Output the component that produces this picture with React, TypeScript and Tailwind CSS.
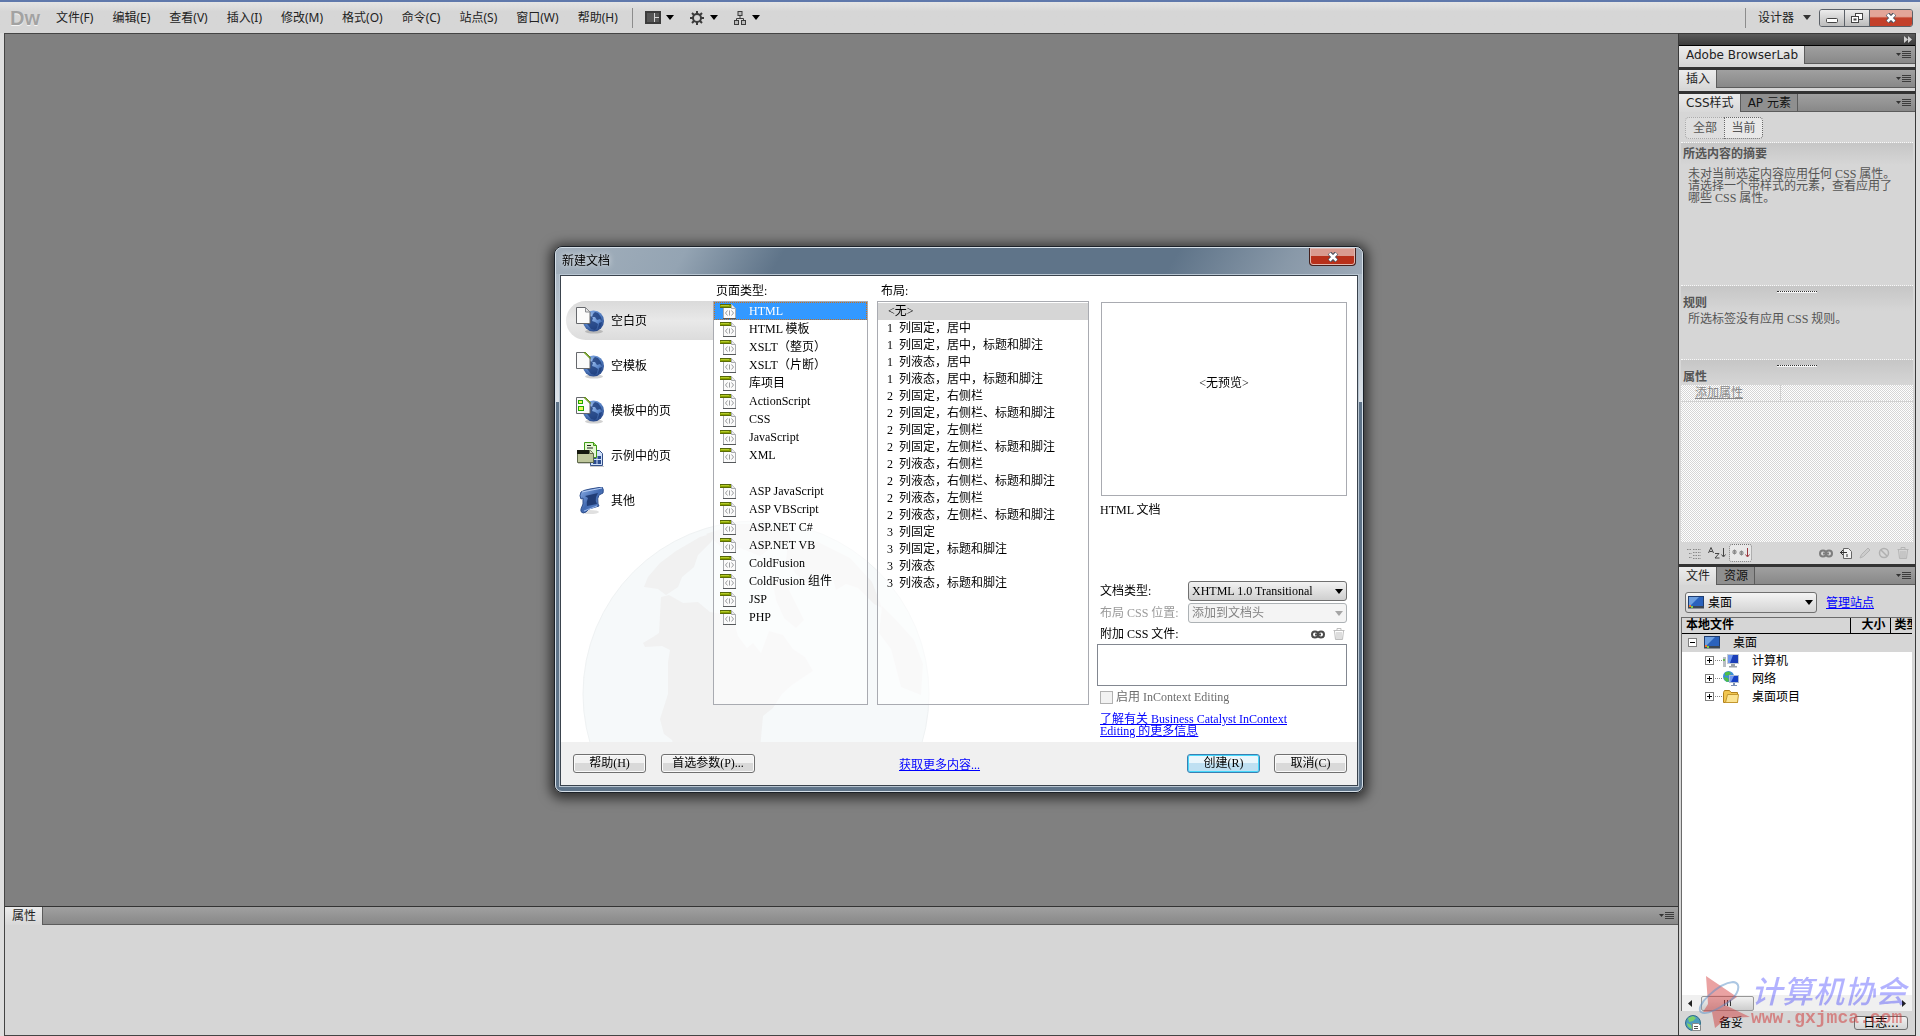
import { useState, type ReactNode } from "react";
import clsx from "clsx";

const MENUS = [
  "文件(F)",
  "编辑(E)",
  "查看(V)",
  "插入(I)",
  "修改(M)",
  "格式(O)",
  "命令(C)",
  "站点(S)",
  "窗口(W)",
  "帮助(H)",
];

const PAGE_TYPES = [
  "HTML",
  "HTML 模板",
  "XSLT（整页）",
  "XSLT（片断）",
  "库项目",
  "ActionScript",
  "CSS",
  "JavaScript",
  "XML",
  "",
  "ASP JavaScript",
  "ASP VBScript",
  "ASP.NET C#",
  "ASP.NET VB",
  "ColdFusion",
  "ColdFusion 组件",
  "JSP",
  "PHP",
];

const LAYOUTS: [string, string][] = [
  ["1", "列固定，居中"],
  ["1", "列固定，居中，标题和脚注"],
  ["1", "列液态，居中"],
  ["1", "列液态，居中，标题和脚注"],
  ["2", "列固定，右侧栏"],
  ["2", "列固定，右侧栏、标题和脚注"],
  ["2", "列固定，左侧栏"],
  ["2", "列固定，左侧栏、标题和脚注"],
  ["2", "列液态，右侧栏"],
  ["2", "列液态，右侧栏、标题和脚注"],
  ["2", "列液态，左侧栏"],
  ["2", "列液态，左侧栏、标题和脚注"],
  ["3", "列固定"],
  ["3", "列固定，标题和脚注"],
  ["3", "列液态"],
  ["3", "列液态，标题和脚注"],
];

function Arrow({ className = "text-black" }: { className?: string }) {
  return (
    <svg width="8" height="5" viewBox="0 0 8 5" className={clsx("shrink-0", className)}>
      <path d="M0 0h8L4 5z" fill="currentColor" />
    </svg>
  );
}

/* ---------- icons of the new document dialog ---------- */

function DocIcon() {
  return (
    <svg width="17" height="17" viewBox="0 0 17 17" className="shrink-0">
      <path d="M3.500 1.500h8l4 4v10h-12z" fill="#fbfbfb" stroke="#a9abae" />
      <path d="M11.500 1.500v4h4" fill="#ececec" stroke="#a9abae" />
      <path d="M3 15.500h13" stroke="#55585b" />
      <path d="M7.500 7.500L5.500 10l2 2.500M11.500 7.500l2 2.500-2 2.500M9.500 7.500v5" fill="none" stroke="#9a9c9e" />
      <path d="M0 1h11v4H0z" fill="#8aa300" />
      <path d="M0 1h11v1H0z" fill="#55660a" />
      <path d="M1 2h8v1H1z" fill="#b4cb2a" />
      <path d="M0 4h11v1H0z" fill="#5b6d06" />
    </svg>
  );
}

function IconDefs() {
  return (
    <defs>
      <radialGradient id="globe" cx="40%" cy="30%" r="70%">
        <stop offset="0" stopColor="#9dbdec" />
        <stop offset="0.6" stopColor="#5a86ca" />
        <stop offset="1" stopColor="#27488a" />
      </radialGradient>
      <linearGradient id="scroll" x1="0" y1="0" x2="1" y2="1">
        <stop offset="0" stopColor="#8db0e8" />
        <stop offset="0.5" stopColor="#4169b0" />
        <stop offset="1" stopColor="#6d95d6" />
      </linearGradient>
    </defs>
  );
}

function GlobeIcon({ kind }: { kind: "blank" | "template" | "page" }) {
  return (
    <svg width="29" height="27" viewBox="0 0 29 27" className="shrink-0">
      <IconDefs />
      <ellipse cx="18" cy="24.500" rx="9" ry="2" fill="#000" opacity="0.18" />
      <circle cx="17.500" cy="14" r="10.500" fill="url(#globe)" />
      <path
        d="M19 5l3 1 3 4 1 4-2-2-3 1-2-3-3 0 1-3zM12 11l3-2 2 2-1 3 3 1 3 2-1 4-2 2-4-1-3-4-2-2 1-3zM23 16l3-1-1 4-3 3z"
        fill="#1d3c7a"
        opacity="0.8"
      />
      <path d="M.5.500h9L14 5v11.500H.5z" fill="#fbfbfb" stroke="#66686c" />
      {kind === "blank" && <path d="M9.500.500V5H14z" fill="#e4e4e4" stroke="#8a8c90" />}
      {kind !== "blank" && <path d="M8 .500h1.500L14 5v1.500z" fill="#9cc63c" stroke="#5f8a1c" />}
      {kind === "page" && (
        <g fill="#eaf95f" stroke="#20a800">
          <rect x="2.500" y="3.500" width="4" height="3" />
          <rect x="2.500" y="9.500" width="5" height="4" />
        </g>
      )}
    </svg>
  );
}

function SampleIcon() {
  return (
    <svg width="29" height="27" viewBox="0 0 29 27" className="shrink-0">
      <path d="M14.500 8.500h9l3 3v12h-12z" fill="#cfe0fa" stroke="#345088" />
      <path d="M17 14h8v8h-8z" fill="#2c4c8e" />
      <path d="M17 17.500h8M21 14v8" stroke="#cfe0fa" />
      <path d="M8.500.500h9l3 3v12h-12z" fill="#e6f8d4" stroke="#3f9a16" />
      <path d="M11 3.500h4M11 6h6" stroke="#222" />
      <path d="M17.500.500v3h3" fill="#a6d672" stroke="#3f9a16" />
      <path d="M1.500 8.500h13l3 3v9h-16z" fill="#bfc79c" stroke="#5f6a4b" />
      <path d="M1 8h12v4H1z" fill="#15180e" />
      <path d="M13.500 8.500v3h4" fill="#dde3c4" stroke="#5f6a4b" />
      <path d="M2 21.500h12M14 24.500h14" stroke="#555" opacity="0.3" />
    </svg>
  );
}

function ScrollIcon() {
  return (
    <svg width="29" height="27" viewBox="0 0 29 27" className="shrink-0">
      <IconDefs />
      <ellipse cx="14" cy="25" rx="9" ry="2" fill="#000" opacity="0.12" />
      <path
        d="M5 5q3-2 9-3l12-2q2 2 1 6l-4 2q-2 3-1 9l1 2-10 3q-3 4-6 4-3-1-2-4l2-5V11l-2 1q-2-3 0-7z"
        fill="url(#scroll)"
        stroke="#2f4f8c"
      />
      <path d="M9 9l13-3-2 4q-1 4 1 7l-10 2q-1-4 1-8z" fill="#213d76" />
      <path d="M6 5l20-4" stroke="#b5cdf5" />
      <path d="M8 24l13-5" stroke="#9bbaf0" />
    </svg>
  );
}

const CATEGORIES: { label: string; icon: ReactNode }[] = [
  { label: "空白页", icon: <GlobeIcon kind="blank" /> },
  { label: "空模板", icon: <GlobeIcon kind="template" /> },
  { label: "模板中的页", icon: <GlobeIcon kind="page" /> },
  { label: "示例中的页", icon: <SampleIcon /> },
  { label: "其他", icon: <ScrollIcon /> },
];

function WorldBackdrop() {
  return (
    <svg
      width="348"
      height="222"
      viewBox="0 0 348 222"
      className="pointer-events-none absolute bottom-0 left-[21px]"
    >
      <circle cx="174" cy="174" r="173" fill="#f6f9fa" stroke="#eff2f3" />
      <g fill="#f1f1f1">
        <path d="M79 77l8-2 14 8 15-1 12 10 14 2 10 8 4 14 9 12 6-5 8 10 8-22 14 4 10 14 12 8 8 14-12 8-9 6-10 9-9 14-10 8-2 22-1 12H93l-3-10-8-6-4-15 8-25 0-32 2-12-8-4-17 1-2-4 10-6 6-4z" />
        <path d="M66 57l12-14 16-12 24-14 14-4-2 8-14 14-4 12-12 10-4 10-12 8-8-6-14-2z" />
        <path d="M124 14l30-10h32l20 8 4 10-18 4-14 10-20-8-14 4-8-8z" />
        <path d="M206 24l30-2 32 16 22 24 10 26-8-4-16-16-12-4-10 6-4-14-14-2-8 12-14-12-10-14z" />
        <path d="M190 60l14 4 8 16 10 20-8 8-12-10-8-18z" />
        <path d="M300 86l14 14 18 20 9 24-2 31-20-8-10-38-12-16z" />
      </g>
    </svg>
  );
}

function LinkIcon({ className }: { className: string }) {
  return (
    <svg width="14" height="9" viewBox="0 0 14 9" className={className}>
      <g fill="none" stroke="currentColor" strokeWidth="2">
        <rect x="1" y="1.500" width="6" height="6" rx="3" />
        <rect x="7" y="1.500" width="6" height="6" rx="3" />
        <path d="M4 4.500h6" />
      </g>
    </svg>
  );
}

function TrashIcon({ className }: { className: string }) {
  return (
    <svg width="12" height="12" viewBox="0 0 12 12" className={className}>
      <path
        d="M.5 2.500h11M4 2V.500h4V2M1.500 3l1 8.500h7l1-8.500M4 4v7M6 4v7M8 4v7"
        fill="none"
        stroke="currentColor"
      />
    </svg>
  );
}

function CloseMark() {
  return (
    <svg width="12" height="10" viewBox="0 0 12 10">
      <path d="M2.500 1l7 8M9.500 1l-7 8" stroke="#4d5360" strokeWidth="4.500" />
      <path d="M2.500 1.500l7 7M9.500 1.500l-7 7" stroke="#fff" strokeWidth="2.500" />
    </svg>
  );
}

function DialogButton({ children, primary, wide }: { children: ReactNode; primary?: boolean; wide?: boolean }) {
  return (
    <button
      type="button"
      className={clsx(
        "h-[19px] rounded-[3px] border text-center leading-4",
        wide ? "w-[94px]" : "w-[73px]",
        primary
          ? "border-[#3c7fb1] bg-linear-to-b from-[#eaf6fc] from-50% to-[#bfe0f2] to-50% ring-1 ring-[#46d8fb] ring-inset"
          : "border-[#707070] bg-linear-to-b from-[#f2f2f2] from-50% to-[#d9d9d9] to-50% ring-1 ring-[#fafafa] ring-inset"
      )}
    >
      {children}
    </button>
  );
}

function NewDocumentDialog() {
  const [category, setCategory] = useState(0);
  const [pageType, setPageType] = useState("HTML");
  const [layout, setLayout] = useState(-1);

  return (
    <div className="fixed inset-0 flex items-center justify-center pt-[3px] pr-[2px]">
      <div
        role="dialog"
        aria-labelledby="dialog-title"
        className="w-[810px] rounded-lg border border-[#1b2128] shadow-[0_2px_12px_4px_rgba(0,0,0,0.6)] [font-family:'Liberation_Serif','Noto_Sans_CJK_SC',serif]"
      >
        <div className="rounded-[7px] border border-[#d5dfe8] bg-[#5f7489] bg-[linear-gradient(to_bottom,#9fadbb,#dde3e9)] bg-[length:100%_154px] bg-no-repeat">
          <div className="flex h-[26px] items-start justify-between rounded-t-[6px] bg-[linear-gradient(120deg,#a3b0bc_0,#94a4b3_16%,#5f7489_28%,#5f7489_76%,#8898a8_90%,#9daab8_100%)] px-[6px]">
            <h1
              id="dialog-title"
              className="pt-[3px] text-[12px] leading-5 text-black [text-shadow:0_0_6px_#fff]"
            >
              新建文档
            </h1>
            <button
              type="button"
              aria-label="关闭"
              className="flex h-[18px] w-[47px] items-center justify-center rounded-b-[4px] border border-t-0 border-[#43201d] bg-linear-to-b from-[#d99a8f] from-45% to-[#b8301a] to-50% ring-1 ring-[#e0b7b0] ring-inset"
            >
              <CloseMark />
            </button>
          </div>

          <div className="px-[3px] pb-1">
            <div className="border border-[#b9c6d2]">
              <div className="border border-[#3a434d] bg-white text-[12px] text-black">
                <div className="relative flex h-[466px]">
                  <WorldBackdrop />

                  {/* Categories */}
                  <nav className="relative flex w-[152px] flex-col gap-[6px] pt-[25px] pl-[5px]">
                    {CATEGORIES.map((c, i) => (
                      <button
                        key={c.label}
                        type="button"
                        onClick={() => setCategory(i)}
                        className={clsx(
                          "flex h-[39px] items-center gap-[6px] rounded-l-full pl-[10px] text-left",
                          i === category && "bg-linear-to-b from-[#dadada] via-[#e9e9e9] to-[#dcdcdc]"
                        )}
                      >
                        {c.icon}
                        <span>{c.label}</span>
                      </button>
                    ))}
                  </nav>

                  {/* Page types */}
                  <section className="relative flex w-[155px] flex-col pt-[5px] pb-[37px]">
                    <h2 className="pl-[3px] leading-5">页面类型:</h2>
                    <ul className="flex-1 border border-[#a9abb1] bg-white/60">
                      {PAGE_TYPES.map((t, i) => (
                        <li key={i} className="h-[18px]">
                          {t && (
                            <button
                              type="button"
                              onClick={() => setPageType(t)}
                              className={clsx(
                                "flex h-[18px] w-full items-center gap-3 pl-[6px] text-left",
                                t === pageType &&
                                  "bg-[#3399ff] text-white outline-1 -outline-offset-1 outline-[#c9701a] outline-dotted"
                              )}
                            >
                              <DocIcon />
                              {t}
                            </button>
                          )}
                        </li>
                      ))}
                    </ul>
                  </section>

                  {/* Layouts */}
                  <section className="relative ml-[9px] flex w-[212px] flex-col pt-[5px] pb-[37px]">
                    <h2 className="pl-1 leading-5">布局:</h2>
                    <ul className="flex-1 border border-[#a9abb1] bg-white/60">
                      <li>
                        <button
                          type="button"
                          onClick={() => setLayout(-1)}
                          className={clsx("h-[17px] w-full pl-[10px] text-left leading-[17px]", layout === -1 && "bg-[#d6d6d6]")}
                        >
                          &lt;无&gt;
                        </button>
                      </li>
                      {LAYOUTS.map(([cols, name], i) => (
                        <li key={name + cols}>
                          <button
                            type="button"
                            onClick={() => setLayout(i)}
                            className={clsx("flex h-[17px] w-full pl-[9px] text-left leading-[17px]", layout === i && "bg-[#d6d6d6]")}
                          >
                            <span className="w-3">{cols}</span>
                            {name}
                          </button>
                        </li>
                      ))}
                    </ul>
                  </section>

                  {/* Preview and options */}
                  <section className="relative ml-2 flex flex-1 flex-col pt-[26px] pr-[10px] pb-[5px]">
                    <div className="ml-1 flex h-[194px] items-center justify-center border border-[#a9abb1] pb-8">
                      &lt;无预览&gt;
                    </div>
                    <p className="mt-1 pl-[3px] leading-5">HTML 文档</p>

                    <div className="mt-auto flex h-[22px] items-center justify-between pl-[3px]">
                      <label htmlFor="doctype">文档类型:</label>
                      <div className="relative">
                        <select
                          id="doctype"
                          className="block h-5 w-[159px] appearance-none rounded-[3px] border border-[#707070] bg-linear-to-b from-[#f2f2f2] to-[#cfcfcf] pl-[3px]"
                        >
                          <option>XHTML 1.0 Transitional</option>
                        </select>
                        <span className="pointer-events-none absolute inset-y-0 right-1 flex items-center">
                          <Arrow />
                        </span>
                      </div>
                    </div>
                    <div className="flex h-[22px] items-center justify-between pl-[3px]">
                      <label htmlFor="csspos" className="text-[#9a9a9a]">
                        布局 CSS 位置:
                      </label>
                      <div className="relative">
                        <select
                          id="csspos"
                          disabled
                          className="block h-5 w-[159px] appearance-none rounded-[3px] border border-[#adb2b5] bg-[#f4f4f4] pl-[3px] text-[#838383] opacity-100"
                        >
                          <option>添加到文档头</option>
                        </select>
                        <span className="pointer-events-none absolute inset-y-0 right-1 flex items-center">
                          <Arrow className="text-[#a5a5a5]" />
                        </span>
                      </div>
                    </div>
                    <div className="flex h-5 items-center pl-[3px]">
                      <label htmlFor="cssfiles" className="flex-1">
                        附加 CSS 文件:
                      </label>
                      <button type="button" aria-label="附加样式表" className="mr-2">
                        <LinkIcon className="text-[#4a4a4a]" />
                      </button>
                      <button type="button" aria-label="删除" className="mr-[2px]">
                        <TrashIcon className="text-[#bdbdbd]" />
                      </button>
                    </div>
                    <textarea id="cssfiles" className="h-[42px] resize-none border border-[#828790] bg-white" />
                    <label className="flex h-[22px] items-center gap-[3px] pl-[3px] text-[#6d6d6d]">
                      <input
                        type="checkbox"
                        disabled
                        className="size-[13px] appearance-none border border-[#b1b1b1] bg-[#f2f2f2]"
                      />
                      启用 InContext Editing
                    </label>
                    <a href="#" className="mt-[5px] ml-[3px] w-[225px] leading-3 text-[#0000ff] underline">
                      了解有关 Business Catalyst InContext Editing 的更多信息
                    </a>
                  </section>
                </div>

                <footer className="flex h-[43px] items-center bg-[#f0f0f0] pr-[10px] pb-[1px] pl-3">
                  <DialogButton>帮助(H)</DialogButton>
                  <span className="w-[15px]" />
                  <DialogButton wide>首选参数(P)...</DialogButton>
                  <a href="#" className="mt-1 ml-36 text-[#0000ff] underline">
                    获取更多内容...
                  </a>
                  <div className="ml-auto flex gap-[14px]">
                    <DialogButton primary>创建(R)</DialogButton>
                    <DialogButton>取消(C)</DialogButton>
                  </div>
                </footer>
              </div>
            </div>
          </div>
        </div>
      </div>
    </div>
  );
}

/* ---------- application frame ---------- */

function MenuBar() {
  return (
    <header className="flex h-[33px] items-center border-t-2 border-[#5f78ab] bg-linear-to-b from-[#e4e4e4] to-[#d6d6d6] to-30% pr-[7px] pl-[10px] text-[12px] text-[#222]">
      <span className="w-[46px] text-[20px] leading-8 font-bold text-[#a2a2a2] [font-family:'Liberation_Sans',sans-serif] [text-shadow:0_1px_0_#f4f4f4]">
        Dw
      </span>
      <nav className="flex gap-[19px]">
        {MENUS.map((m) => (
          <button key={m} type="button">
            {m}
          </button>
        ))}
      </nav>
      <span className="ml-[14px] h-5 w-px bg-[#8c8c8c]" />
      <button type="button" aria-label="布局" className="ml-3 flex items-center gap-[5px]">
        <svg width="16" height="13" viewBox="0 0 16 13">
          <rect width="16" height="13" fill="#3b3b3b" />
          <path d="M2 2h7v9H2zM10 2h4v4h-4zM10 7h4v4h-4z" fill="#555" />
          <path d="M9.500 2v9M10 6.500h4" stroke="#d6d6d6" />
        </svg>
        <Arrow />
      </button>
      <button type="button" aria-label="扩展" className="ml-4 flex items-center gap-[6px]">
        <svg width="14" height="14" viewBox="0 0 14 14">
          <g stroke="#3b3b3b" fill="none">
            <circle cx="7" cy="7" r="4" strokeWidth="2" />
            <path
              d="M7 0v3M7 11v3M0 7h3M11 7h3M2 2l2 2M10 10l2 2M12 2l-2 2M4 10l-2 2"
              strokeWidth="2"
            />
          </g>
        </svg>
        <Arrow />
      </button>
      <button type="button" aria-label="站点" className="ml-4 flex items-center gap-[6px]">
        <svg width="12" height="14" viewBox="0 0 12 14">
          <g fill="#bbb" stroke="#3b3b3b">
            <rect x="4" y=".5" width="4" height="4" />
            <rect x=".5" y="9.500" width="4" height="4" />
            <rect x="7.500" y="9.500" width="4" height="4" />
            <path d="M6 4.500v3M2.500 9.500v-2h7v2" fill="none" />
          </g>
        </svg>
        <Arrow />
      </button>

      <span className="ml-auto h-5 w-px bg-[#8c8c8c]" />
      <button type="button" className="ml-3 flex items-center gap-[9px]">
        设计器
        <Arrow className="text-[#333]" />
      </button>
      <div className="ml-2 flex h-[18px] overflow-hidden rounded-[3px] border border-[#5b6067]">
        <button
          type="button"
          aria-label="最小化"
          className="flex w-[25px] items-center justify-center border-r border-[#5b6067] bg-linear-to-b from-[#ececec] to-[#bcbcbc]"
        >
          <svg width="12" height="10" viewBox="0 0 12 10">
            <rect x=".5" y="5.500" width="11" height="4" rx="1" fill="#fff" stroke="#444" />
          </svg>
        </button>
        <button
          type="button"
          aria-label="还原"
          className="flex w-[25px] items-center justify-center border-r border-[#5b6067] bg-linear-to-b from-[#ececec] to-[#bcbcbc]"
        >
          <svg width="12" height="12" viewBox="0 0 12 12">
            <rect x="4.500" y="1.500" width="7" height="6" fill="#fff" stroke="#444" />
            <rect x=".5" y="4.500" width="7" height="6" fill="#fff" stroke="#444" />
            <rect x="3" y="7" width="2" height="1" fill="#999" stroke="#444" />
          </svg>
        </button>
        <button
          type="button"
          aria-label="关闭"
          className="flex w-[42px] items-center justify-center bg-linear-to-b from-[#e3a598] from-40% to-[#c3402a] to-50%"
        >
          <CloseMark />
        </button>
      </div>
    </header>
  );
}

function TabStrip({ tabs }: { tabs: string[] }) {
  return (
    <div className="flex h-[18px] bg-linear-to-b from-[#a0a0a0] to-[#878787] text-[12px]">
      {tabs.map((t, i) => (
        <button
          key={t}
          type="button"
          className={clsx(
            "border-r border-[#5c5c5c] pr-[6px] pl-[7px] leading-[18px] whitespace-nowrap",
            i === 0 ? "bg-linear-to-b from-[#ececec] to-[#d8d8d8] text-[#222]" : "border-b bg-[#8f8f8f] text-[#111]"
          )}
        >
          {t}
        </button>
      ))}
      <div className="flex flex-1 items-center justify-end border-b border-[#5c5c5c] pr-1">
        <button type="button" aria-label="面板菜单">
          <svg width="15" height="8" viewBox="0 0 15 8" className="block">
            <path d="M0 2h5L2.500 5z" fill="#333" />
            <path d="M6 .5h9M6 2.500h9M6 4.500h9M6 6.500h9" stroke="#3c3c3c" />
          </svg>
        </button>
      </div>
    </div>
  );
}

function SectionHead({ title, handle }: { title: string; handle?: boolean }) {
  return (
    <div className="border-t border-dotted border-[#f8f8f8] bg-linear-to-b from-[#c6c6c6] to-[#d6d6d6] px-[2px]">
      {handle && <div className="mx-auto mt-[5px] h-[2px] w-10 border-t border-dotted border-[#333] bg-[#f5f5f5]" />}
      <h3 className={clsx("font-bold", handle ? "pt-[2px] leading-4" : "leading-[22px]")}>{title}</h3>
    </div>
  );
}

function CssPanel() {
  return (
    <div className="text-[12px] text-[#555] [font-family:'Liberation_Serif','Noto_Sans_CJK_SC',serif]">
      <div className="flex px-[6px] pt-[5px] pb-[3px] [font-family:'DejaVu_Sans','Noto_Sans_CJK_SC',sans-serif]">
        <button type="button" className="h-[22px] w-[39px] rounded-l-[4px] border border-r-0 border-dotted border-[#aaa] bg-[#dedede]">
          全部
        </button>
        <button type="button" className="h-[22px] w-[39px] rounded-r-[4px] border border-dotted border-[#666] bg-[#e8e8e8]">
          当前
        </button>
      </div>
      <div className="px-[2px]">
        <section className="h-[143px]">
          <SectionHead title="所选内容的摘要" />
          <p className="pt-[3px] pr-3 pl-[7px] leading-3">
            未对当前选定内容应用任何 CSS 属性。请选择一个带样式的元素，查看应用了哪些 CSS 属性。
          </p>
        </section>
        <section className="h-[74px]">
          <SectionHead title="规则" handle />
          <p className="pt-[2px] pl-[7px] leading-3">所选标签没有应用 CSS 规则。</p>
        </section>
        <section>
          <SectionHead title="属性" handle />
          <div className="h-[157px] bg-[repeating-conic-gradient(#ffffff_0_25%,#d6d6d6_0_50%)] bg-[length:2px_2px]">
            <div className="grid h-[17px] grid-cols-[100px_1fr] border-b border-[#d2d2d2]">
              <a href="#" className="border-r border-[#cfcfcf] pl-[14px] leading-4 text-[#888] underline">
                添加属性
              </a>
              <span />
            </div>
          </div>
        </section>
      </div>
      <div className="flex h-[22px] items-center pr-[6px] pl-2">
        <button type="button" aria-label="显示类别视图">
          <svg width="15" height="11" viewBox="0 0 15 11">
            <path d="M0 1.500h4M2 5.500h3M2 9.500h3M6 1.500h8M6 4.500h8M6 7.500h8M6 10.500h8" stroke="#888" strokeDasharray="1.500 1" />
          </svg>
        </button>
        <button type="button" aria-label="显示列表视图" className="ml-[6px]">
          <svg width="18" height="12" viewBox="0 0 18 12">
            <path
              d="M.5 6L3 .500 5.500 6M1.500 4.500h3M7 6.500h4l-4 4.500h4.500M15.500 1v8M13.500 7.500l2 2.500 2-2.500"
              fill="none"
              stroke="#444"
            />
          </svg>
        </button>
        <button
          type="button"
          aria-label="只显示设置属性"
          className="ml-[3px] flex h-[18px] w-[23px] items-center justify-center rounded-[3px] border border-dotted border-[#777] bg-[#e8e8e8]"
        >
          <svg width="18" height="12" viewBox="0 0 18 12">
            <path d="M0 5h5M2.500 2.500v5M1 3l3 4M4 3L1 7M7 6h5M9.500 3.500v5M8 4l3 4M11 4L8 8" stroke="#888" />
            <path d="M15.500 1v8M13.500 7.500l2 2.500 2-2.500" fill="none" stroke="#99353c" />
          </svg>
        </button>
        <div className="ml-auto flex items-center gap-[7px]">
          <LinkIcon className="text-[#7d7d7d]" />
          <svg width="12" height="12" viewBox="0 0 12 12">
            <path d="M3.500 1.500h5l3 3v7h-8z" fill="#f2f2f2" stroke="#666" />
            <path d="M0 5.500h7M3 3L.5 5.500 3 8M7 7v3" stroke="#333" fill="none" />
          </svg>
          <svg width="12" height="12" viewBox="0 0 12 12">
            <path d="M1 11l1.500-3.500L9 1l2 2-6.500 6.500z" fill="#ccc" stroke="#b3b3b3" />
          </svg>
          <svg width="12" height="12" viewBox="0 0 12 12">
            <circle cx="6" cy="6" r="4.500" fill="none" stroke="#b0b0b0" strokeWidth="1.500" />
            <path d="M3 3l6 6" stroke="#b0b0b0" strokeWidth="1.500" />
          </svg>
          <TrashIcon className="text-[#b5b5b5]" />
        </div>
      </div>
    </div>
  );
}

function DesktopIcon() {
  return (
    <svg width="16" height="13" viewBox="0 0 16 13" className="shrink-0">
      <rect x=".5" y=".5" width="15" height="10" fill="#2a62bd" stroke="#1f3d70" />
      <path d="M1 1h10L3 9H1z" fill="#7fb0ea" opacity="0.8" />
      <path d="M0 10h16v2.500H0z" fill="#3c4754" />
      <rect x="1" y="9" width="2" height="2" fill="#f1762b" />
      <rect x="3" y="10" width="2" height="2" fill="#7fd04a" />
    </svg>
  );
}

function ComputerIcon() {
  return (
    <svg width="16" height="14" viewBox="0 0 16 14" className="shrink-0">
      <path d="M0 3h3v10H0z" fill="#b9bec3" />
      <path d="M0 5h2v2H0z" fill="#62b552" />
      <rect x="4.500" y=".5" width="11" height="9" fill="#1b3fb8" stroke="#c5cbd2" />
      <path d="M5 1h5l-3 8H5z" fill="#6e96ee" />
      <path d="M8 10h4v2h2v1.500H6V12h2z" fill="#9aa1a8" />
    </svg>
  );
}

function NetworkIcon() {
  return (
    <svg width="16" height="16" viewBox="0 0 16 16" className="shrink-0">
      <circle cx="5.500" cy="5.500" r="5.500" fill="#3d8fd6" />
      <path d="M2 1.500l4-1 2 2-3 2-3 0zM1 6l4 1 1 3-2 1C2 10 1 8 1 6z" fill="#4fbf45" />
      <rect x="6.500" y="4.500" width="9" height="7" fill="#1740c4" stroke="#aebbd0" />
      <path d="M7 5h4l-3 6H7z" fill="#7298ef" />
      <path d="M10 12h2v2h2v1H8v-1h2z" fill="#7b8fb4" />
    </svg>
  );
}

function FolderIcon() {
  return (
    <svg width="16" height="13" viewBox="0 0 16 13" className="shrink-0">
      <path d="M.5 2.500l1-2h5l1.500 2h6.500v10H.5z" fill="#f2c64f" stroke="#b1811d" />
      <path d="M2.500 12.500l2-8h11l-1 8z" fill="#fbe391" stroke="#c3972e" />
    </svg>
  );
}

function Toggle({ open }: { open?: boolean }) {
  return (
    <svg width="9" height="9" viewBox="0 0 9 9" className="shrink-0 bg-white">
      <rect x=".5" y=".5" width="8" height="8" fill="none" stroke="#7f7f7f" />
      <path d={open ? "M2 4.500h5" : "M2 4.500h5M4.500 2v5"} stroke="#000" />
    </svg>
  );
}

const TREE = [
  { name: "计算机", icon: <ComputerIcon /> },
  { name: "网络", icon: <NetworkIcon /> },
  { name: "桌面项目", icon: <FolderIcon /> },
];

function FilesPanel() {
  return (
    <div className="flex flex-1 flex-col text-[12px] text-black">
      <div className="flex items-center gap-[9px] px-[6px] pt-[7px] pb-1">
        <div className="relative">
          <select
            aria-label="站点"
            className="block h-[21px] w-[132px] appearance-none rounded-[3px] border border-[#707070] bg-linear-to-b from-[#f4f4f4] to-[#d4d4d4] pl-[22px]"
          >
            <option>桌面</option>
          </select>
          <span className="pointer-events-none absolute inset-y-0 left-[3px] flex items-center">
            <DesktopIcon />
          </span>
          <span className="pointer-events-none absolute inset-y-0 right-1 flex items-center">
            <Arrow />
          </span>
        </div>
        <a href="#" className="text-[#0000ff] underline">
          管理站点
        </a>
      </div>

      <div className="mr-[3px] ml-[2px] flex flex-1 flex-col border-t border-l border-[#6b6b6b] bg-white">
        <table className="w-full table-fixed border-collapse">
          <thead>
            <tr className="h-[15px] border-b border-black bg-[#d6d6d6] text-left leading-[14px]">
              <th className="border-r border-black pl-1">本地文件</th>
              <th className="w-10 border-r border-black pr-1 text-right">大小</th>
              <th className="w-[22px] overflow-hidden pl-1 whitespace-nowrap">类型</th>
            </tr>
          </thead>
          <tbody>
            <tr className="bg-[#d6d6d6]">
              <td colSpan={3}>
                <div className="flex h-[18px] items-center pl-[6px]">
                  <Toggle open />
                  <span className="ml-[7px]">
                    <DesktopIcon />
                  </span>
                  <span className="ml-[13px]">桌面</span>
                </div>
              </td>
            </tr>
            {TREE.map((n) => (
              <tr key={n.name}>
                <td colSpan={3}>
                  <div className="flex h-[18px] items-center pl-[23px]">
                    <Toggle />
                    <span className="mx-px w-[7px] border-t border-dotted border-[#888]" />
                    {n.icon}
                    <span className="ml-[13px]">{n.name}</span>
                  </div>
                </td>
              </tr>
            ))}
          </tbody>
        </table>
        <div className="mt-auto flex h-4 items-center gap-[9px] bg-[#f0f0f0] px-[6px]">
          <svg width="4" height="7" viewBox="0 0 4 7">
            <path d="M4 0v7L0 3.500z" fill="#222" />
          </svg>
          <div className="flex h-[15px] w-[53px] items-center justify-center gap-[2px] rounded-[2px] border border-[#979797] bg-linear-to-b from-[#f2f2f2] to-[#cdcdcd]">
            <span className="h-[6px] w-px bg-[#333]" />
            <span className="h-[6px] w-px bg-[#333]" />
            <span className="h-[6px] w-px bg-[#333]" />
          </div>
          <svg width="4" height="7" viewBox="0 0 4 7" className="ml-auto">
            <path d="M0 0v7l4-3.500z" fill="#222" />
          </svg>
        </div>
      </div>

      <div className="flex h-6 items-center pr-[7px] pl-[6px]">
        <svg width="17" height="17" viewBox="0 0 17 17">
          <circle cx="8" cy="8" r="7.500" fill="#4d9bbf" stroke="#2f6f88" />
          <path d="M3 3l5-2 3 2-3 3-4 1zM2 8l4 2 1 4C4 13 2 11 2 8z" fill="#7ccf6a" />
          <path d="M7.500 8.500h6l2 2v5h-8z" fill="#fff" stroke="#888" />
          <path d="M9 11.500h4M9 13.500h4" stroke="#555" />
        </svg>
        <span className="ml-[17px]">备妥</span>
        <button
          type="button"
          className="ml-auto h-[14px] w-[54px] rounded-[3px] border border-[#707070] bg-linear-to-b from-[#f2f2f2] to-[#d4d4d4] leading-3"
        >
          日志...
        </button>
      </div>
    </div>
  );
}

function Watermark() {
  return (
    <div className="pointer-events-none fixed right-[14px] bottom-[6px] flex items-end">
      <svg width="54" height="56" viewBox="0 0 54 56">
        <path d="M9 2l31 21-12 8 25 12-23 1-12 10-3-16-9 0 5-8z" fill="#d03030" opacity="0.45" />
        <path
          d="M4 38C-3 32 22 9 36 8c10 1 5 14-6 21C18 37 8 41 4 38z"
          fill="none"
          stroke="#5a8fc8"
          strokeWidth="2"
          opacity="0.5"
        />
      </svg>
      <div>
        <p className="text-right text-[31px] leading-8 font-medium text-[#0000ff]/30 italic [font-family:'Noto_Sans_CJK_SC',sans-serif]">
          计算机协会
        </p>
        <p className="text-[18px] leading-6 font-bold text-[#d02020]/45 [font-family:'Liberation_Mono',monospace]">
          www.gxjmca.com
        </p>
      </div>
    </div>
  );
}

export default function App() {
  return (
    <div className="flex min-h-screen flex-col bg-[#d9d9d9] [font-family:'Noto_Sans','Noto_Sans_CJK_SC',sans-serif]">
      <MenuBar />
      <div className="flex flex-1 border-r-4 border-l-4 border-[#dedede]">
        <div className="flex flex-1 flex-col border border-r-0 border-[#444]">
          <main className="flex-1 bg-[#808080]" />
          <section className="flex h-[129px] flex-col border-t border-[#333] bg-[#d6d6d6]">
            <TabStrip tabs={["属性"]} />
          </section>
        </div>

        <aside className="flex w-[238px] flex-col border border-[#3a3a3a] bg-[#d6d6d6] [font-family:'DejaVu_Sans','Noto_Sans_CJK_SC',sans-serif]">
          <div className="flex h-3 items-center justify-end border-b border-black bg-linear-to-b from-[#5a5a5a] to-[#3c3c3c] pr-[3px]">
            <button type="button" aria-label="折叠为图标">
              <svg width="8" height="7" viewBox="0 0 8 7" className="block">
                <path d="M0 0l4 3.500L0 7zM4 0l4 3.500L4 7z" fill="#d0d0d0" />
              </svg>
            </button>
          </div>
          <div className="border-b-3 border-[#333] pb-[3px]">
            <TabStrip tabs={["Adobe BrowserLab"]} />
          </div>
          <div className="border-b-3 border-[#333] pb-[3px]">
            <TabStrip tabs={["插入"]} />
          </div>
          <div className="border-b-3 border-[#333]">
            <TabStrip tabs={["CSS样式", "AP 元素"]} />
            <CssPanel />
          </div>
          <TabStrip tabs={["文件", "资源"]} />
          <FilesPanel />
        </aside>
      </div>
      <NewDocumentDialog />
      <Watermark />
    </div>
  );
}
